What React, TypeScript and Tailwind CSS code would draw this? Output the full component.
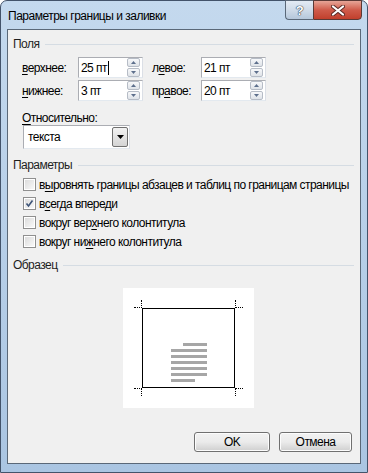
import React from "react";

function U({ children }: { children: React.ReactNode }) {
  return <span className="underline underline-offset-[2px] decoration-1">{children}</span>;
}

function GroupHeader({ title, className = "" }: { title: string; className?: string }) {
  return (
    <div className={`flex items-center h-4 pl-[5px] pr-[6px] ${className}`}>
      <span className="text-[#1e1e1e] leading-4">{title}</span>
      <div className="flex-1 ml-[6px] h-px bg-[#d5dce3]" />
    </div>
  );
}

function SpinBox({ value, cursor = false }: { value: string; cursor?: boolean }) {
  return (
    <div className="w-[65px] h-[21px] flex items-center bg-white border border-[#abadb3] border-b-[#e3e9ef] border-r-[#dbdfe6] pl-[2px] pr-[2px]">
      <span className="flex-1 leading-4 flex items-center">
        {value}
        {cursor && <span className="ml-[1px] w-px h-[14px] bg-black" />}
      </span>
      <div className="flex flex-col w-[13px] h-[19px] gap-px">
        <SpinBtn up />
        <SpinBtn />
      </div>
    </div>
  );
}

function SpinBtn({ up = false }: { up?: boolean }) {
  return (
    <div className="flex-1 flex items-center justify-center rounded-[2px] border border-[#b6bcc6] bg-gradient-to-b from-[#f7f8fa] to-[#dfe3e8]">
      <svg width="5" height="3" viewBox="0 0 5 3">
        <path d={up ? "M0 3 L2.5 0 L5 3 Z" : "M0 0 L5 0 L2.5 3 Z"} fill="#5d6f8c" />
      </svg>
    </div>
  );
}

function CheckRow({ checked = false, children }: { checked?: boolean; children: React.ReactNode }) {
  return (
    <div className="h-[19px] flex items-center pl-[15px] whitespace-nowrap">
      <div className="shrink-0 w-[13px] h-[13px] border border-[#8f8f8f] bg-white p-px">
        <div className="w-full h-full bg-gradient-to-br from-[#dcdcdc] to-[#f8f8f8] flex items-center justify-center">
          {checked && (
            <svg width="9" height="9" viewBox="0 0 9 9">
              <path d="M1.5 4.5 L3.5 7 L7.5 1.5" stroke="#3d5478" strokeWidth="1.6" fill="none" />
            </svg>
          )}
        </div>
      </div>
      <span className="ml-[3px] leading-4">{children}</span>
    </div>
  );
}

function DialogButton({ label, width }: { label: string; width: string }) {
  return (
    <div className={`${width} h-[20px] rounded-[3px] border border-[#707070] bg-gradient-to-b from-[#f2f2f2] via-[#ebebeb] to-[#cfcfcf] flex items-center justify-center shadow-[inset_0_0_0_1px_#fcfcfc]`}>
      <span className="leading-4">{label}</span>
    </div>
  );
}

export default function App() {
  return (
    <div className="w-[368px] h-[473px] rounded-t-[7px] border border-[#43536a] bg-gradient-to-b from-[#c4d9ee] via-[#b7cfe8] to-[#aac5e2] flex flex-col px-[6px] pb-[8px] font-['Liberation_Sans',Arial,sans-serif] text-[12px] tracking-[-0.55px] text-black">
      <div className="h-[28px] flex items-start">
        <span className="mt-[7px] ml-px leading-4 whitespace-nowrap tracking-[-0.5px]">Параметры границы и заливки</span>
        <div className="ml-auto -mr-[1px] -mt-px flex">
          <div className="w-[28px] h-[20px] rounded-bl-[4px] border border-[#5a6878] border-r-0 bg-gradient-to-b from-[#e3ebf4] via-[#cfdbe8] to-[#b5c7db] flex items-center justify-center">
            <span className="text-white font-bold text-[13px] leading-none [text-shadow:0_0_1px_#2e3d4f,0_0_1px_#2e3d4f,0_0_1px_#2e3d4f]">?</span>
          </div>
          <div className="w-[49px] h-[20px] rounded-br-[4px] border border-[#5a3a36] bg-gradient-to-b from-[#e6a597] via-[#cf5b4a] to-[#c13f2c] flex items-center justify-center">
            <svg width="14" height="11" viewBox="0 0 14 11">
              <path d="M2 1.5 L12 9.5 M12 1.5 L2 9.5" stroke="#5a2a24" strokeWidth="4" strokeLinecap="round" />
              <path d="M2 1.5 L12 9.5 M12 1.5 L2 9.5" stroke="#ffffff" strokeWidth="2.2" strokeLinecap="round" />
            </svg>
          </div>
        </div>
      </div>

      <div className="flex-1 border border-[#5a6878] bg-[#f0f0f0] flex flex-col">
        <GroupHeader title="Поля" className="mt-[6px]" />

        <div className="mt-[5px] flex items-center pl-[14px]">
          <span className="w-[56px] leading-4"><U>в</U>ерхнее:</span>
          <SpinBox value="25 пт" cursor />
          <span className="w-[49px] ml-[9px] leading-4">л<U>е</U>вое:</span>
          <SpinBox value="21 пт" />
        </div>
        <div className="mt-[2px] flex items-center pl-[14px]">
          <span className="w-[56px] leading-4"><U>н</U>ижнее:</span>
          <SpinBox value="3 пт" />
          <span className="w-[49px] ml-[9px] leading-4">пр<U>а</U>вое:</span>
          <SpinBox value="20 пт" />
        </div>

        <div className="mt-[10px] h-[14px] pl-[14px] flex items-center">
          <span className="leading-4"><U>О</U>тносительно:</span>
        </div>
        <div className="ml-[15px] w-[107px] h-[24px] bg-white border border-[#abadb3] border-b-[#e3e9ef] border-r-[#dbdfe6] flex items-center pl-[4px] pr-px">
          <span className="flex-1 leading-4">текста</span>
          <div className="w-[16px] h-[20px] border border-[#707070] rounded-[2px] bg-gradient-to-b from-[#f2f2f2] to-[#d4d4d4] flex items-center justify-center">
            <svg width="7" height="4" viewBox="0 0 7 4">
              <path d="M0 0 L7 0 L3.5 4 Z" fill="#000" />
            </svg>
          </div>
        </div>

        <GroupHeader title="Параметры" className="mt-[8px]" />
        <div className="mt-[2px] flex flex-col">
          <CheckRow>в<U>ы</U>ровнять границы абзацев и таблиц по границам страницы</CheckRow>
          <CheckRow checked>в<U>с</U>егда впереди</CheckRow>
          <CheckRow>вокруг вер<U>х</U>него колонтитула</CheckRow>
          <CheckRow>вокруг ни<U>ж</U>него колонтитула</CheckRow>
        </div>

        <GroupHeader title="Образец" className="mt-[6px]" />
        <div className="mt-[15px] ml-[115px] w-[131px] h-[120px] bg-white pt-[20px] pl-[19px]">
          <div className="relative w-[93px] h-[80px] border border-black">
            <div className="absolute -left-[9px] -top-[2px] w-[8px] border-t border-dotted border-black" />
            <div className="absolute -left-[2px] -top-[9px] h-[8px] border-l border-dotted border-black" />
            <div className="absolute -right-[9px] -top-[2px] w-[8px] border-t border-dotted border-black" />
            <div className="absolute -right-[2px] -top-[9px] h-[8px] border-l border-dotted border-black" />
            <div className="absolute -left-[9px] -bottom-[2px] w-[8px] border-t border-dotted border-black" />
            <div className="absolute -left-[2px] -bottom-[9px] h-[8px] border-l border-dotted border-black" />
            <div className="absolute -right-[9px] -bottom-[2px] w-[8px] border-t border-dotted border-black" />
            <div className="absolute -right-[2px] -bottom-[9px] h-[8px] border-l border-dotted border-black" />
            <div className="ml-[28px] mt-[34px] w-[36px] flex flex-col gap-[3px]">
              <div className="self-end w-[24px] h-[3px] bg-[#a6a6a6]" />
              <div className="w-[36px] h-[3px] bg-[#a6a6a6]" />
              <div className="w-[36px] h-[3px] bg-[#a6a6a6]" />
              <div className="w-[36px] h-[3px] bg-[#a6a6a6]" />
              <div className="w-[36px] h-[3px] bg-[#a6a6a6]" />
              <div className="w-[36px] h-[3px] bg-[#a6a6a6]" />
              <div className="w-[24px] h-[3px] bg-[#a6a6a6]" />
            </div>
          </div>
        </div>

        <div className="mt-[24px] flex pl-[186px] gap-[9px]">
          <DialogButton label="OK" width="w-[76px]" />
          <DialogButton label="Отмена" width="w-[73px]" />
        </div>
      </div>
    </div>
  );
}
